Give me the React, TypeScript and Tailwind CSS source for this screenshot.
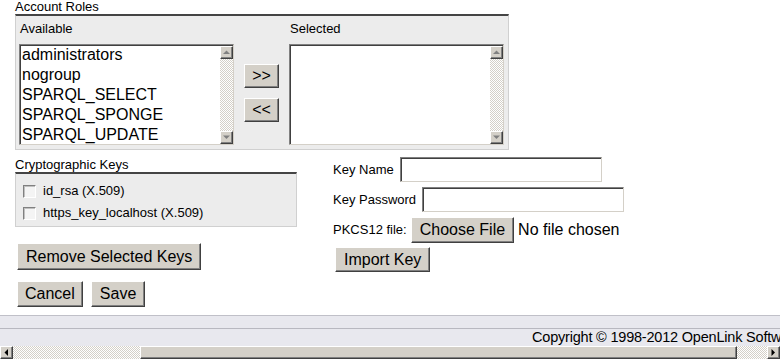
import React from 'react';

const btn =
  "bg-[#d4d0c8] border border-t-white border-l-white border-r-[#404040] border-b-[#404040] shadow-[inset_-1px_-1px_0_#808080] text-[16px] leading-none text-black";

const sunken =
  "bg-white border border-t-[#808080] border-l-[#808080] border-r-[#d4d0c8] border-b-[#d4d0c8] shadow-[inset_1px_1px_0_#404040]";

const dither =
  "bg-[repeating-conic-gradient(#d4d0c8_0%_25%,#ffffff_0%_50%)] bg-[length:2px_2px]";

const ArrowBtn: React.FC<{ dir: 'up' | 'down' | 'left' | 'right'; dark?: boolean }> = ({ dir, dark }) => {
  const pts: Record<string, string> = {
    up: '0,4 3.5,0.5 7,4',
    down: '0,0.5 3.5,4 7,0.5',
    left: '4,0 0.5,3.5 4,7',
    right: '0.5,0 4,3.5 0.5,7',
  };
  const vertical = dir === 'up' || dir === 'down';
  return (
    <div className={`${btn} w-[13px] h-[13px] shrink-0 flex items-center justify-center`}>
      <svg width={vertical ? 7 : 5} height={vertical ? 5 : 7} viewBox={vertical ? '0 0 7 5' : '0 0 5 7'}>
        <polygon points={pts[dir]} fill={dark ? '#000' : '#808080'} />
      </svg>
    </div>
  );
};

const ListBox: React.FC<{ items: string[] }> = ({ items }) => (
  <div className={`${sunken} flex w-[215px] h-[101px]`}>
    <div className="flex-1 pl-[2px] text-[16px] leading-[20px] text-black overflow-hidden">
      {items.map((i) => (
        <div key={i}>{i}</div>
      ))}
    </div>
    <div className="w-[13px] flex flex-col mt-[1px]">
      <ArrowBtn dir="up" />
      <div className={`flex-1 ${dither}`} />
      <ArrowBtn dir="down" />
    </div>
  </div>
);

const Checkbox: React.FC<{ label: string }> = ({ label }) => (
  <div className="flex items-center h-[22px] pl-[7px]">
    <span className="w-[13px] h-[13px] bg-[#f4f4f4] border border-t-[#808080] border-l-[#808080] border-r-white border-b-white shadow-[inset_1px_1px_0_#c0c0c0]" />
    <span className="ml-[7px] text-[13px]">{label}</span>
  </div>
);

export default function App() {
  return (
    <div className="w-[780px] h-[359px] overflow-hidden bg-white flex flex-col font-['Liberation_Sans',Arial,sans-serif] text-black">
      <div className="h-[315px] pl-[15px]">
        {/* Account Roles */}
        <div className="text-[13px] leading-[14px] h-[14px]">Account Roles</div>
        <div className="w-[494px] h-[136px] bg-[#ececec] border-t-2 border-t-[#444] border-x border-b border-x-[#d0d0d0] border-b-[#d0d0d0] flex pl-[3px] pt-[6px]">
          <div>
            <div className="text-[13px] leading-[14px] h-[14px] pl-[1px]">Available</div>
            <div className="mt-[8px]">
              <ListBox items={['administrators', 'nogroup', 'SPARQL_SELECT', 'SPARQL_SPONGE', 'SPARQL_UPDATE']} />
            </div>
          </div>
          <div className="ml-[10px] pt-[42px] flex flex-col gap-[10px]">
            <button className={`${btn} w-[35px] h-[24px]`}>&gt;&gt;</button>
            <button className={`${btn} w-[35px] h-[24px]`}>&lt;&lt;</button>
          </div>
          <div className="ml-[10px]">
            <div className="text-[13px] leading-[14px] h-[14px] pl-[1px]">Selected</div>
            <div className="mt-[8px]">
              <ListBox items={[]} />
            </div>
          </div>
        </div>

        <div className="flex">
          {/* Cryptographic Keys */}
          <div className="w-[282px]">
            <div className="text-[13px] leading-[14px] h-[14px] mt-[8px]">Cryptographic Keys</div>
            <div className="h-[55px] bg-[#ececec] border-t-2 border-t-[#444] border-x border-b border-x-[#d0d0d0] border-b-[#d0d0d0] pt-[6px]">
              <Checkbox label="id_rsa (X.509)" />
              <Checkbox label="https_key_localhost (X.509)" />
            </div>
            <button className={`${btn} mt-[16px] ml-[2px] h-[27px] px-[8px] block`}>Remove Selected Keys</button>
            <div className="flex gap-[8px] mt-[11px] ml-[2px]">
              <button className={`${btn} h-[26px] px-[7px]`}>Cancel</button>
              <button className={`${btn} h-[26px] px-[8px]`}>Save</button>
            </div>
          </div>

          {/* Import form */}
          <div className="ml-[36px] pt-[7px] flex flex-col gap-[5px]">
            <div className="flex items-center h-[25px]">
              <span className="text-[13px]">Key Name</span>
              <div className={`${sunken} ml-[6px] w-[202px] h-[25px]`} />
            </div>
            <div className="flex items-center h-[25px]">
              <span className="text-[13px]">Key Password</span>
              <div className={`${sunken} ml-[6px] w-[202px] h-[25px]`} />
            </div>
            <div className="flex items-center h-[26px]">
              <span className="text-[13px]">PKCS12 file:</span>
              <button className={`${btn} ml-[4px] h-[26px] px-[8px]`}>Choose File</button>
              <span className="ml-[4px] text-[16px]">No file chosen</span>
            </div>
            <button className={`${btn} h-[25px] px-[8px] ml-[2px] -mt-[1px] self-start`}>Import Key</button>
          </div>
        </div>
      </div>

      {/* Footer */}
      <div className="h-[31px] bg-[#e8e8ee] border-t border-[#c0c0c8]">
        <div className="h-[13px] border-b border-[#b8b8c0]" />
        <div className="pl-[532px] whitespace-nowrap text-[14.5px] leading-[17px] tracking-[-0.2px]">
          Copyright © 1998-2012 OpenLink Software
        </div>
      </div>

      {/* Horizontal scrollbar */}
      <div className="h-[13px] flex">
        <ArrowBtn dir="left" dark />
        <div className={`w-[127px] ${dither}`} />
        <div className={`${btn} w-[597px] h-[13px]`} />
        <div className={`flex-1 ${dither}`} />
        <ArrowBtn dir="right" dark />
      </div>
    </div>
  );
}
